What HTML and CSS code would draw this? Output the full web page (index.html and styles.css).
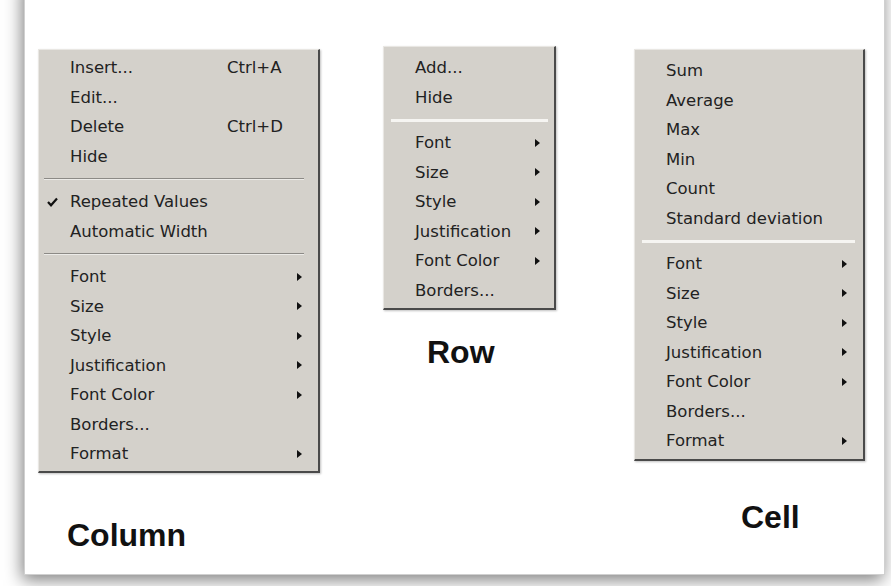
FILE: index.html
```html
<!DOCTYPE html>
<html>

<head>
    <meta charset="UTF-8">
    <title>Context menus</title>
    <link rel="stylesheet" href="styles.css">
</head>

<body>
    <div class="sheet">
        <div class="group group-column">
            <div class="menu menu-column">
                <div class="item"><span class="check"></span><span class="label">Insert...</span><span class="key">Ctrl+A</span></div>
                <div class="item"><span class="check"></span><span class="label">Edit...</span></div>
                <div class="item"><span class="check"></span><span class="label">Delete</span><span class="key">Ctrl+D</span></div>
                <div class="item"><span class="check"></span><span class="label">Hide</span></div>
                <div class="sep sep-dark"></div>
                <div class="item">
                    <span class="check">
                        <svg width="11" height="10" viewBox="0 0 11 10"><path d="M1 5 L4 8.3 L10 1.5" fill="none" stroke="#111" stroke-width="2.2"/></svg>
                    </span>
                    <span class="label">Repeated Values</span>
                </div>
                <div class="item"><span class="check"></span><span class="label">Automatic Width</span></div>
                <div class="sep sep-dark"></div>
                <div class="item"><span class="check"></span><span class="label">Font</span><span class="arrow"></span></div>
                <div class="item"><span class="check"></span><span class="label">Size</span><span class="arrow"></span></div>
                <div class="item"><span class="check"></span><span class="label">Style</span><span class="arrow"></span></div>
                <div class="item"><span class="check"></span><span class="label">Justification</span><span class="arrow"></span></div>
                <div class="item"><span class="check"></span><span class="label">Font Color</span><span class="arrow"></span></div>
                <div class="item"><span class="check"></span><span class="label">Borders...</span></div>
                <div class="item"><span class="check"></span><span class="label">Format</span><span class="arrow"></span></div>
            </div>
            <div class="caption caption-column">Column</div>
        </div>

        <div class="group group-row">
            <div class="menu menu-row">
                <div class="item"><span class="check"></span><span class="label">Add...</span></div>
                <div class="item"><span class="check"></span><span class="label">Hide</span></div>
                <div class="sep sep-light"></div>
                <div class="item"><span class="check"></span><span class="label">Font</span><span class="arrow"></span></div>
                <div class="item"><span class="check"></span><span class="label">Size</span><span class="arrow"></span></div>
                <div class="item"><span class="check"></span><span class="label">Style</span><span class="arrow"></span></div>
                <div class="item"><span class="check"></span><span class="label">Justification</span><span class="arrow"></span></div>
                <div class="item"><span class="check"></span><span class="label">Font Color</span><span class="arrow"></span></div>
                <div class="item"><span class="check"></span><span class="label">Borders...</span></div>
            </div>
            <div class="caption caption-row">Row</div>
        </div>

        <div class="group group-cell">
            <div class="menu menu-cell">
                <div class="item"><span class="check"></span><span class="label">Sum</span></div>
                <div class="item"><span class="check"></span><span class="label">Average</span></div>
                <div class="item"><span class="check"></span><span class="label">Max</span></div>
                <div class="item"><span class="check"></span><span class="label">Min</span></div>
                <div class="item"><span class="check"></span><span class="label">Count</span></div>
                <div class="item"><span class="check"></span><span class="label">Standard deviation</span></div>
                <div class="sep sep-light"></div>
                <div class="item"><span class="check"></span><span class="label">Font</span><span class="arrow"></span></div>
                <div class="item"><span class="check"></span><span class="label">Size</span><span class="arrow"></span></div>
                <div class="item"><span class="check"></span><span class="label">Style</span><span class="arrow"></span></div>
                <div class="item"><span class="check"></span><span class="label">Justification</span><span class="arrow"></span></div>
                <div class="item"><span class="check"></span><span class="label">Font Color</span><span class="arrow"></span></div>
                <div class="item"><span class="check"></span><span class="label">Borders...</span></div>
                <div class="item"><span class="check"></span><span class="label">Format</span><span class="arrow"></span></div>
            </div>
            <div class="caption caption-cell">Cell</div>
        </div>
    </div>
</body>

</html>
```

FILE: styles.css
```css
html, body {
    margin: 0;
    padding: 0;
    background: #fff;
    overflow: hidden;
}

body {
    width: 891px;
    height: 586px;
}

.sheet {
    box-sizing: border-box;
    margin-left: 24px;
    margin-top: -20px;
    width: 861px;
    height: 595px;
    background: #fff;
    border: 1px solid #d0d0d0;
    box-shadow: -2px 5px 16px rgba(0, 0, 0, 0.5);
    display: flex;
    align-items: flex-start;
    padding-top: 65px;
}

.group {
    display: flex;
    flex-direction: column;
}

.group-column {
    margin-left: 13px;
    margin-top: 3px;
}

.group-row {
    margin-left: 63px;
}

.group-cell {
    margin-left: 78px;
    margin-top: 3px;
}

.menu {
    box-sizing: border-box;
    background: #d4d1cb;
    border-top: 1px solid #e9e7e3;
    border-left: 1px solid #e9e7e3;
    border-right: 2px solid #4a4a4a;
    border-bottom: 2px solid #4a4a4a;
    box-shadow: 1px 1px 2px rgba(0, 0, 0, 0.25);
    font-family: "DejaVu Sans", Verdana, sans-serif;
    font-size: 16.5px;
    color: #222;
    padding: 3px 16px 5px 8px;
}

.menu-column {
    width: 282px;
    height: 424px;
}

.menu-row {
    width: 173px;
    height: 264px;
    padding-top: 6px;
    padding-right: 14px;
}

.menu-cell {
    width: 231px;
    height: 412px;
    padding-top: 6px;
}

.item {
    display: flex;
    align-items: center;
    height: 29.5px;
    white-space: nowrap;
}

.check {
    width: 23px;
    flex: none;
    display: flex;
    align-items: center;
}

.label {
    flex: 1;
}

.key {
    width: 75px;
}

.arrow {
    width: 0;
    height: 0;
    border-left: 5px solid #111;
    border-top: 4.5px solid transparent;
    border-bottom: 4.5px solid transparent;
}

.sep {
    height: 16px;
    display: flex;
    align-items: center;
}

.sep::after {
    content: "";
    display: block;
    width: 100%;
}

.sep-dark {
    margin-left: -3px;
    margin-right: -2px;
}

.sep-dark::after {
    border-top: 1px solid #8c8a86;
    border-bottom: 1px solid #ecebe8;
}

.sep-light {
    margin-left: -1px;
    margin-right: -8px;
}

.sep-light::after {
    height: 3px;
    background: #f6f5f2;
}

.caption {
    font-family: "Liberation Sans", Arial, sans-serif;
    font-weight: bold;
    font-size: 32px;
    color: #111;
}

.caption-column {
    margin-top: 44px;
    margin-left: 29px;
}

.caption-row {
    margin-top: 24px;
    margin-left: 44px;
}

.caption-cell {
    margin-top: 38px;
    margin-left: 107px;
}
```
